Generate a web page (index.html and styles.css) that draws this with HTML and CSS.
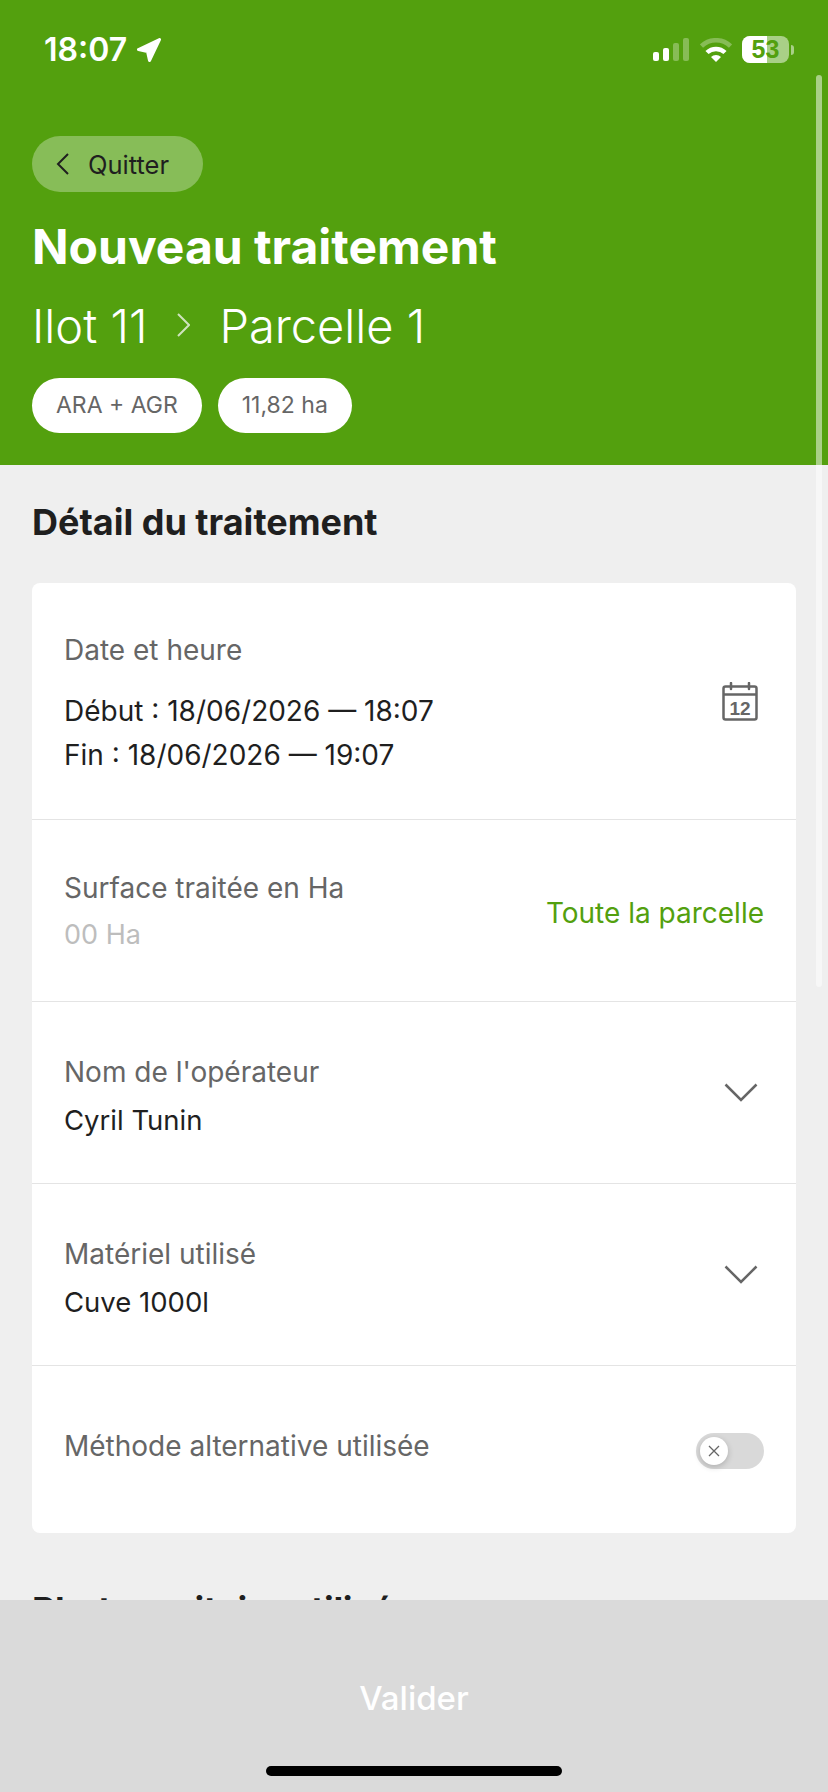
FILE: index.html
```html
<!DOCTYPE html>
<html lang="fr">
<head>
  <meta charset="UTF-8" />
  <meta name="viewport" content="width=device-width, initial-scale=1.0"/>
  <title>Nouveau traitement</title>
  <link rel="stylesheet" href="styles.css">
</head>
<body>
  <div class="screen">
    <header class="header">
      <div class="status">
        <div class="clock">
          <span>18:07</span>
          <svg class="location" viewBox="0 0 24 24" width="24" height="24"><path d="M22.500 1.500 L1.500 11.500 L10.500 13.500 L12.500 22.500 Z" fill="#fff" stroke="#fff" stroke-width="3" stroke-linejoin="round"/></svg>
        </div>
        <div class="status-icons">
          <svg viewBox="0 0 37 23" width="37" height="23">
            <rect x="0" y="14" width="6" height="9" rx="2" fill="#fff"/>
            <rect x="10" y="10" width="6" height="13" rx="2" fill="#fff"/>
            <rect x="20" y="5" width="6" height="18" rx="2" fill="#fff" fill-opacity=".3"/>
            <rect x="30" y="0" width="6" height="23" rx="2" fill="#fff" fill-opacity=".3"/>
          </svg>
          <svg viewBox="0 0 32 24" width="32" height="24">
            <path d="M1.500 8 A21 21 0 0 1 30.500 8" fill="none" stroke="#fff" stroke-opacity=".3" stroke-width="4.500"/>
            <path d="M7 14.500 A13 13 0 0 1 25 14.500" fill="none" stroke="#fff" stroke-width="4.500"/>
            <path d="M11 19 L16 24 L21 19 A7 7 0 0 0 11 19 Z" fill="#fff"/>
          </svg>
          <div class="battery">
            <div class="battery-body">
              <div class="battery-fill"></div>
              <span class="battery-level">53</span>
            </div>
            <div class="battery-tip"></div>
          </div>
        </div>
      </div>
      <button class="back">
        <svg viewBox="0 0 14 24" width="14" height="24"><path d="M12 2 L2 12 L12 22" fill="none" stroke="#1f1f1f" stroke-width="2"/></svg>
        Quitter
      </button>
      <h1>Nouveau traitement</h1>
      <div class="crumbs">
        <span>Ilot 11</span>
        <svg viewBox="0 0 14 24" width="14" height="24"><path d="M2 1 L13 12 L2 23" fill="none" stroke="#cfe3bd" stroke-width="2"/></svg>
        <span>Parcelle 1</span>
      </div>
      <div class="chips">
        <span class="chip">ARA + AGR</span>
        <span class="chip">11,82 ha</span>
      </div>
    </header>

    <main class="content">
      <h2>Détail du traitement</h2>
      <section class="card">
        <div class="row row-date">
          <div class="date-text">
            <div class="label">Date et heure</div>
            <div class="dates">Début : 18/06/2026 — 18:07<br>Fin : 18/06/2026 — 19:07</div>
          </div>
          <svg class="row-icon" viewBox="0 0 36 39" width="36" height="39">
            <rect x="1.500" y="4.500" width="33" height="33" rx="2" fill="none" stroke="#666" stroke-width="2.500"/>
            <path d="M1.500 12.500 H34.500" stroke="#666" stroke-width="2.500"/>
            <path d="M9 1 V7 M27 1 V7" stroke="#666" stroke-width="2.500" stroke-linecap="round"/>
            <text x="18" y="33" text-anchor="middle" class="cal-day">12</text>
          </svg>
        </div>
        <div class="row row-surface">
          <div>
            <div class="label">Surface traitée en Ha</div>
            <div class="placeholder">00 Ha</div>
          </div>
          <span class="link">Toute la parcelle</span>
        </div>
        <div class="row row-select">
          <div>
            <div class="label">Nom de l'opérateur</div>
            <div class="value">Cyril Tunin</div>
          </div>
          <svg class="row-icon" viewBox="0 0 34 20" width="34" height="20"><path d="M1.500 1.500 L17 17 L32.500 1.500" fill="none" stroke="#666" stroke-width="2.500"/></svg>
        </div>
        <div class="row row-select">
          <div>
            <div class="label">Matériel utilisé</div>
            <div class="value">Cuve 1000l</div>
          </div>
          <svg class="row-icon" viewBox="0 0 34 20" width="34" height="20"><path d="M1.500 1.500 L17 17 L32.500 1.500" fill="none" stroke="#666" stroke-width="2.500"/></svg>
        </div>
        <div class="row row-switch">
          <div class="label">Méthode alternative utilisée</div>
          <div class="switch">
            <div class="knob">
              <svg viewBox="0 0 12 12" width="12" height="12"><path d="M1 1 L11 11 M11 1 L1 11" stroke="#666" stroke-width="1.300"/></svg>
            </div>
          </div>
        </div>
      </section>
      <h2 class="next-title">Phytosanitaire utilisé</h2>
    </main>

    <footer class="footer">
      <span class="submit">Valider</span>
      <div class="home-bar"></div>
    </footer>

    <div class="scrollbar"></div>
  </div>
</body>
</html>
```

FILE: styles.css
```css
* {
  box-sizing: border-box;
}

body {
  margin: 0;
  background: #efefef;
  font-family: Inter, 'Noto Sans', sans-serif;
  color: #1f1f1f;
}

.screen {
  position: relative;
  width: 828px;
  height: 1792px;
  overflow: hidden;
  display: flex;
  flex-direction: column;
}

.header {
  height: 465px;
  flex-shrink: 0;
  padding: 0 32px;
  background: #53a00e;
  color: #fff;
}

.status {
  height: 136px;
  margin: 0 2px 0 12px;
  padding-top: 32px;
  display: flex;
  justify-content: space-between;
  align-items: flex-start;
}

.clock {
  display: flex;
  align-items: center;
  gap: 10px;
  font-size: 32px;
  font-weight: 600;
  line-height: 36px;
}

.status-icons {
  display: flex;
  align-items: center;
  gap: 10px;
  margin-top: 4px;
}

.battery {
  display: flex;
  align-items: center;
  gap: 2px;
}

.battery-body {
  position: relative;
  width: 47px;
  height: 27px;
  border-radius: 8px;
  overflow: hidden;
  background: rgba(255,255,255,0.5);
}

.battery-fill {
  width: 25px;
  height: 100%;
  background: #fff;
}

.battery-level {
  position: absolute;
  inset: 0;
  text-align: center;
  font-family: 'Liberation Sans', sans-serif;
  font-size: 25px;
  font-weight: 700;
  line-height: 27px;
  color: #53a00e;
}

.battery-tip {
  width: 3px;
  height: 10px;
  border-radius: 0 3px 3px 0;
  background: rgba(255,255,255,0.5);
}

.back {
  display: flex;
  align-items: center;
  gap: 18px;
  width: 171px;
  height: 56px;
  padding: 0 0 0 24px;
  border: none;
  border-radius: 28px;
  background: #87bd58;
  color: #1f1f1f;
  font-family: inherit;
  font-size: 25.5px;
}

h1 {
  margin: 25px 0 0;
  font-size: 48px;
  font-weight: 700;
  line-height: 60px;
}

.crumbs {
  display: flex;
  align-items: center;
  gap: 29px;
  margin-top: 16px;
  height: 64px;
  font-size: 47px;
  font-weight: 300;
}

.chips {
  display: flex;
  gap: 16px;
  margin-top: 21px;
}

.chip {
  height: 55px;
  padding: 0 24px;
  border-radius: 28px;
  background: #fff;
  color: #666;
  font-size: 23px;
  line-height: 55px;
}

.content {
  flex: 1;
  padding: 0 32px;
}

h2 {
  margin: 0;
  font-size: 36px;
  font-weight: 700;
  line-height: 44px;
}

.content > h2:first-child {
  margin-top: 35px;
}

.card {
  margin-top: 39px;
  border-radius: 8px;
  background: #fff;
}

.row {
  display: flex;
  justify-content: space-between;
  align-items: center;
  padding: 0 32px;
  border-bottom: 1px solid #e4e4e4;
}

.row:last-child {
  border-bottom: none;
}

.row-date {
  height: 237px;
}

.date-text {
  padding-top: 7px;
}

.row-surface,
.row-select {
  height: 182px;
}

.row-select > div {
  padding-top: 6px;
}

.row-surface > div {
  padding-top: 2px;
}

.row-switch {
  height: 167px;
  align-items: flex-start;
  padding-top: 62px;
}

.row-icon {
  margin-right: 6px;
}

.label {
  font-size: 28px;
  line-height: 36px;
  color: #666;
}

.dates {
  margin-top: 21px;
  font-size: 28px;
  line-height: 44px;
  color: #1f1f1f;
}

.value {
  margin-top: 12px;
  font-size: 27.5px;
  line-height: 36px;
}

.placeholder {
  margin-top: 11px;
  font-size: 27px;
  line-height: 36px;
  color: #bdbdbd;
}

.link {
  padding-top: 4px;
  font-size: 28px;
  color: #53a00e;
}

.cal-day {
  font-family: 'Liberation Sans', sans-serif;
  font-size: 19px;
  font-weight: 700;
  fill: #666;
}

.switch {
  width: 68px;
  height: 36px;
  margin-top: 5px;
  padding: 4px;
  border-radius: 18px;
  background: #d9d9d9;
}

.knob {
  display: flex;
  align-items: center;
  justify-content: center;
  width: 28px;
  height: 28px;
  border-radius: 50%;
  background: #fff;
  box-shadow: 0 2px 6px rgba(0,0,0,0.2);
}

.next-title {
  margin-top: 55px;
  letter-spacing: -0.4px;
}

.footer {
  position: absolute;
  left: 0;
  right: 0;
  bottom: 0;
  height: 192px;
  display: flex;
  flex-direction: column;
  align-items: center;
  background: #dadada;
}

.submit {
  margin-top: 76px;
  color: #fff;
  font-size: 33px;
  font-weight: 500;
  line-height: 44px;
}

.home-bar {
  width: 296px;
  height: 10px;
  margin-top: 46px;
  border-radius: 5px;
  background: #000;
}

.scrollbar {
  position: absolute;
  right: 6px;
  top: 75px;
  width: 6px;
  height: 912px;
  border-radius: 3px;
  background: rgba(255,255,255,0.5);
}
```
